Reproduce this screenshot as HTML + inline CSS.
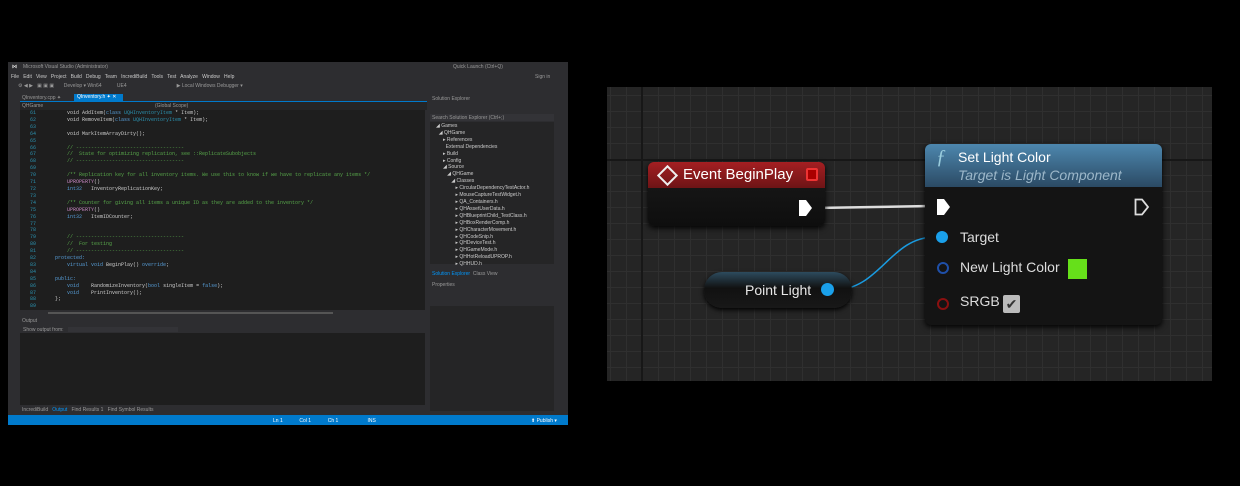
<!DOCTYPE html><html><head><style>
body{margin:0;width:1240px;height:486px;background:#000;position:relative;overflow:hidden;font-family:"Liberation Sans",sans-serif}
.a{position:absolute}
.vs{left:8px;top:62px;width:560px;height:363px;background:#2d2d30}
.t{font-size:5px;color:#999;white-space:nowrap}
.code{font-family:"Liberation Mono",monospace;font-size:5px;line-height:6.9px;color:#ccc;white-space:pre}
.g{color:#57a64a}.b{color:#569cd6}.p{color:#c586c0}.n{color:#2b91af}
.bp{left:607px;top:87px;width:605px;height:294px;background-color:#252525;
background-image:linear-gradient(#2f2f2f 1px,transparent 1px),linear-gradient(90deg,#2f2f2f 1px,transparent 1px);
background-size:16px 16px,16px 16px;background-position:0 8px,3px 0}
.node{background:#141414;border-radius:6px;box-shadow:0 2px 6px #000}
.lbl{color:#ddd;font-size:14px}
</style></head><body>
<div class="a vs">
 <div class="a t" style="left:4px;top:2px;color:#ddd;font-weight:bold">⋈</div>
 <div class="a t" style="left:15px;top:2px">Microsoft Visual Studio (Administrator)</div>
 <div class="a t" style="left:445px;top:2px">Quick Launch (Ctrl+Q)</div>
 <div class="a t" style="left:3px;top:12px;color:#ccc">File &nbsp; Edit &nbsp; View &nbsp; Project &nbsp; Build &nbsp; Debug &nbsp; Team &nbsp; IncrediBuild &nbsp; Tools &nbsp; Test &nbsp; Analyze &nbsp; Window &nbsp; Help</div>
 <div class="a t" style="left:527px;top:12px">Sign in</div>
 <div class="a t" style="left:10px;top:21px">⚙ ◀ ▶ &nbsp; ▣ ▣ ▣ &nbsp;&nbsp;&nbsp;&nbsp;&nbsp; Develop ▾ Win64 &nbsp;&nbsp;&nbsp;&nbsp;&nbsp;&nbsp;&nbsp;&nbsp;&nbsp; UE4 &nbsp;&nbsp;&nbsp;&nbsp;&nbsp;&nbsp;&nbsp;&nbsp;&nbsp;&nbsp;&nbsp;&nbsp;&nbsp;&nbsp;&nbsp;&nbsp;&nbsp;&nbsp;&nbsp;&nbsp;&nbsp;&nbsp;&nbsp;&nbsp;&nbsp;&nbsp;&nbsp;&nbsp;&nbsp;&nbsp;&nbsp;&nbsp;&nbsp;&nbsp; ▶ Local Windows Debugger ▾</div>
 <div class="a t" style="left:14px;top:33px">QInventory.cpp ✦</div>
 <div class="a t" style="left:66px;top:32px;width:46px;height:7px;background:#007acc;color:#fff;padding-left:3px">QInventory.h ✦ ✕</div>
 <div class="a" style="left:12px;top:39px;width:407px;height:1px;background:#007acc"></div>
 <div class="a" style="left:12px;top:40px;width:407px;height:8px;background:#252526"></div>
 <div class="a t" style="left:14px;top:41px">QHGame</div><div class="a t" style="left:147px;top:41px">(Global Scope)</div>
 <div class="a" style="left:12px;top:48px;width:405px;height:200px;background:#1e1e1e"></div>
 <div class="a code n" style="left:22px;top:48px">61
62
63
64
65
66
67
68
69
70
71
72
73
74
75
76
77
78
79
80
81
82
83
84
85
86
87
88
89
90</div>
 <div class="a code" style="left:47px;top:48px">    void AddItem(<span class="b">class</span> <span class="n">UQHInventoryItem</span> * Item);
    void RemoveItem(<span class="b">class</span> <span class="n">UQHInventoryItem</span> * Item);

    void MarkItemArrayDirty();

    <span class="g">// ------------------------------------</span>
    <span class="g">//  State for optimizing replication, see ::ReplicateSubobjects</span>
    <span class="g">// ------------------------------------</span>

    <span class="g">/** Replication key for all inventory items. We use this to know if we have to replicate any items */</span>
    <span class="p">UPROPERTY</span>()
    <span class="b">int32</span>   InventoryReplicationKey;

    <span class="g">/** Counter for giving all items a unique ID as they are added to the inventory */</span>
    <span class="p">UPROPERTY</span>()
    <span class="b">int32</span>   ItemIDCounter;


    <span class="g">// ------------------------------------</span>
    <span class="g">//  For testing</span>
    <span class="g">// ------------------------------------</span>
<span class="b">protected:</span>
    <span class="b">virtual void</span> BeginPlay() <span class="b">override</span>;

<span class="b">public:</span>
    <span class="b">void</span>    RandomizeInventory(<span class="b">bool</span> singleItem = <span class="b">false</span>);
    <span class="b">void</span>    PrintInventory();
};</div>
 <div class="a" style="left:12px;top:248px;width:405px;height:6px;background:#2d2d30"></div>
 <div class="a" style="left:40px;top:250px;width:285px;height:2px;background:#555"></div>
 <div class="a t" style="left:14px;top:256px">Output</div>
 <div class="a" style="left:12px;top:264px;width:405px;height:7px;background:#2d2d30"></div>
 <div class="a t" style="left:15px;top:265px">Show output from:</div>
 <div class="a" style="left:60px;top:265px;width:110px;height:5px;background:#333337"></div>
 <div class="a" style="left:12px;top:271px;width:405px;height:72px;background:#1e1e1e"></div>
 <div class="a t" style="left:14px;top:345px">IncrediBuild &nbsp; <span style="color:#0097fb">Output</span> &nbsp; Find Results 1 &nbsp; Find Symbol Results</div>
 <div class="a t" style="left:424px;top:34px">Solution Explorer</div>
 <div class="a" style="left:422px;top:52px;width:124px;height:7px;background:#333337"></div>
 <div class="a t" style="left:424px;top:53px">Search Solution Explorer (Ctrl+;)</div>
 <div class="a" style="left:422px;top:60px;width:124px;height:142px;background:#252526"></div>
 <div class="a t" style="left:428px;top:61px;line-height:6.9px;white-space:pre;color:#ccc">◢ Games
  ◢ QHGame
     ▸ References
       External Dependencies
     ▸ Build
     ▸ Config
     ◢ Source
        ◢ QHGame
           ◢ Classes
              ▸ CircularDependencyTestActor.h
              ▸ MouseCaptureTestWidget.h
              ▸ QA_Containers.h
              ▸ QHAssetUserData.h
              ▸ QHBlueprintChild_TestClass.h
              ▸ QHBoxRenderComp.h
              ▸ QHCharacterMovement.h
              ▸ QHCodeSnip.h
              ▸ QHDeviceTest.h
              ▸ QHGameMode.h
              ▸ QHHotReloadUPROP.h
              ▸ QHHUD.h</div>
 <div class="a t" style="left:424px;top:209px;color:#0097fb">Solution Explorer <span style="color:#999">&nbsp;Class View</span></div>
 <div class="a t" style="left:424px;top:220px">Properties</div>
 <div class="a" style="left:422px;top:244px;width:124px;height:105px;background:#252526"></div>
 <div class="a" style="left:0;top:353px;width:560px;height:10px;background:#007acc"></div>
 <div class="a t" style="left:265px;top:356px;color:#fff">Ln 1 &nbsp;&nbsp;&nbsp;&nbsp;&nbsp;&nbsp;&nbsp;&nbsp;&nbsp;&nbsp; Col 1 &nbsp;&nbsp;&nbsp;&nbsp;&nbsp;&nbsp;&nbsp;&nbsp;&nbsp;&nbsp; Ch 1 &nbsp;&nbsp;&nbsp;&nbsp;&nbsp;&nbsp;&nbsp;&nbsp;&nbsp;&nbsp;&nbsp;&nbsp;&nbsp;&nbsp;&nbsp;&nbsp;&nbsp;&nbsp;&nbsp; INS</div>
 <div class="a t" style="left:523px;top:356px;color:#fff">⬆ Publish ▾</div>
</div>

<div class="a bp"></div>
<div class="a" style="left:641px;top:87px;width:2px;height:294px;background:#171717"></div>
<div class="a" style="left:607px;top:159px;width:605px;height:2px;background:#171717"></div>
<svg class="a" style="left:0;top:0" width="1240" height="486">
 <path d="M815 208 L930 206" stroke="#ddd" stroke-width="2.5" fill="none"/>
 <path d="M834 290 C880 290,890 237,935 237" stroke="#1a9be0" stroke-width="1.5" fill="none"/>
</svg>
<div class="a node" style="left:648px;top:162px;width:177px;height:64px;background:linear-gradient(#1a1a1a,#0e0e0e)"></div>
<div class="a" style="left:648px;top:162px;width:177px;height:26px;border-radius:6px 6px 0 0;background:linear-gradient(#a41f22,#6e1416)"></div>
<div class="a" style="left:660px;top:168px;width:11px;height:11px;border:2px solid #eee;transform:rotate(45deg)"></div>
<div class="a lbl" style="left:683px;top:166px;color:#fff;font-size:15px">Event BeginPlay</div>
<div class="a" style="left:806px;top:168px;width:8px;height:9px;background:#a00;border:2px solid #e33;border-radius:2px"></div>
<svg class="a" style="left:798px;top:199px" width="16" height="18"><path d="M1 1 H8 L14 9 L8 17 H1 Z" fill="#fff"/></svg>

<div class="a node" style="left:925px;top:144px;width:237px;height:181px;background:#141414"></div>
<div class="a" style="left:925px;top:144px;width:237px;height:43px;border-radius:6px 6px 0 0;background:linear-gradient(#4d87ae,#2b4a64)"></div>
<div class="a" style="left:936px;top:146px;color:#9cd;font:italic 20px 'Liberation Serif',serif">ƒ</div>
<div class="a lbl" style="left:958px;top:149px;color:#fff">Set Light Color</div>
<div class="a lbl" style="left:958px;top:167px;color:#9cb7c9;font-style:italic">Target is Light Component</div>
<svg class="a" style="left:936px;top:198px" width="16" height="18"><path d="M1 1 H8 L14 9 L8 17 H1 Z" fill="#fff"/></svg>
<svg class="a" style="left:1134px;top:198px" width="16" height="18"><path d="M1.5 1.5 H8 L14 9 L8 16.5 H1.5 Z" fill="none" stroke="#ddd" stroke-width="1.8"/></svg>
<div class="a" style="left:936px;top:231px;width:12px;height:12px;border-radius:50%;background:#1aa0ea"></div>
<div class="a lbl" style="left:960px;top:229px">Target</div>
<div class="a" style="left:937px;top:262px;width:8px;height:8px;border-radius:50%;border:2px solid #1f4fa8"></div>
<div class="a lbl" style="left:960px;top:259px">New Light Color</div>
<div class="a" style="left:1068px;top:259px;width:19px;height:20px;background:#66e01a"></div>
<div class="a" style="left:937px;top:298px;width:8px;height:8px;border-radius:50%;border:2px solid #8a1010"></div>
<div class="a lbl" style="left:960px;top:293px">SRGB</div>
<div class="a" style="left:1003px;top:295px;width:17px;height:18px;background:#bbb;border-radius:2px;color:#333;font-size:14px;text-align:center;line-height:18px">✔</div>

<div class="a" style="left:704px;top:272px;width:148px;height:36px;border-radius:18px;background:linear-gradient(#2d4b5e,#111 45%,#181818);box-shadow:0 2px 5px #000"></div>
<div class="a lbl" style="left:745px;top:282px;color:#e8e8e8">Point Light</div>
<div class="a" style="left:821px;top:283px;width:13px;height:13px;border-radius:50%;background:#1aa0ea"></div>
</body></html>
